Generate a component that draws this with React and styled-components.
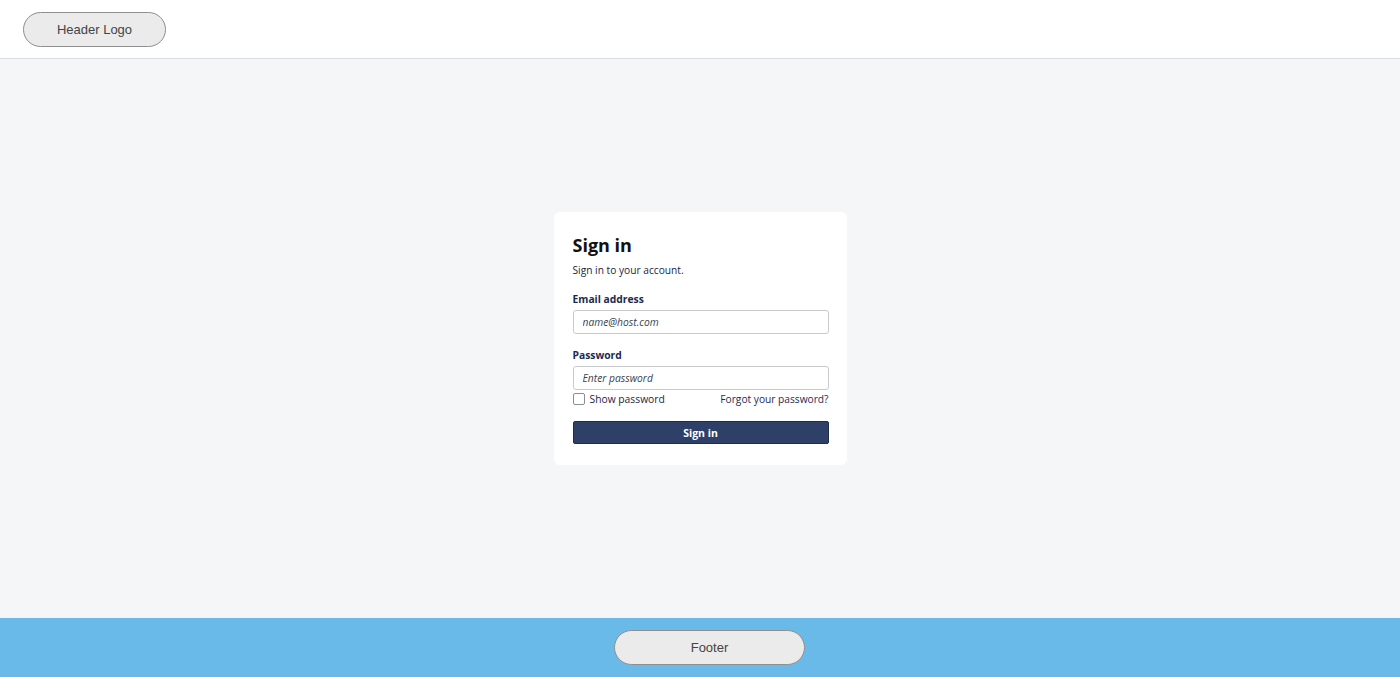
import React from "react";
import styled, { createGlobalStyle } from "styled-components";

const Global = createGlobalStyle`
  html, body { margin: 0; padding: 0; height: 100%; }
  body { font-family: "Open Sans", "Noto Sans", sans-serif; }
  #root { height: 100%; }
`;

const Page = styled.div`
  display: flex;
  flex-direction: column;
  height: 677px;
`;

const Header = styled.header`
  height: 58px;
  flex: none;
  background: #ffffff;
  border-bottom: 1px solid #dcdde0;
  display: flex;
  align-items: center;
  padding-left: 23px;
`;

const Pill = styled.div`
  width: ${(p) => p.$w}px;
  height: 35px;
  box-sizing: border-box;
  border: 1px solid #8f8f8f;
  border-radius: 18px;
  background: #ebebeb;
  display: flex;
  align-items: center;
  justify-content: center;
  font-family: "Liberation Sans", Arial, sans-serif;
  font-size: 13px;
  color: #444;
`;

const Main = styled.main`
  flex: 1;
  background: #f5f6f8;
  display: flex;
  align-items: center;
  justify-content: center;
`;

const Card = styled.form`
  width: 293px;
  box-sizing: border-box;
  background: #fff;
  border-radius: 6px;
  padding: 20px 18px 21px 19px;
  display: flex;
  flex-direction: column;
`;

const Title = styled.h1`
  margin: 0;
  font-size: 18px;
  font-weight: 700;
  color: #111;
  line-height: 26px;
`;

const Subtitle = styled.p`
  margin: 5px 0 0;
  font-size: 10.2px;
  color: #1c2540;
  line-height: 15px;
`;

const Field = styled.div`
  display: flex;
  flex-direction: column;
  margin-top: ${(p) => p.$mt}px;
`;

const Label = styled.label`
  font-size: 10.3px;
  font-weight: 700;
  color: #1d2a52;
  line-height: 15px;
  margin-bottom: 3px;
`;

const Input = styled.input`
  height: 24px;
  box-sizing: border-box;
  border: 1px solid #c8cacf;
  border-radius: 3px;
  padding: 0 9px;
  font-family: "Open Sans", sans-serif;
  font-size: 10.3px;
  color: #222;
  outline: none;
  &::placeholder {
    font-style: italic;
    color: #3a3f4f;
  }
`;

const OptionsRow = styled.div`
  display: flex;
  justify-content: space-between;
  align-items: center;
  margin-top: 2px;
  height: 14px;
`;

const CheckLabel = styled.label`
  display: flex;
  align-items: center;
  gap: 5px;
  font-size: 10.3px;
  color: #1c2540;
`;

const Box = styled.span`
  width: 12px;
  height: 12px;
  box-sizing: border-box;
  border: 1px solid #8a8d96;
  border-radius: 2px;
  background: #fff;
`;

const Link = styled.a`
  font-size: 10.2px;
  color: #1c2a55;
  text-decoration: none;
`;

const Button = styled.button`
  margin-top: 15px;
  height: 23px;
  border: 1px solid #1f2c4a;
  border-radius: 2px;
  background: #2e4068;
  color: #fff;
  font-family: "Open Sans", sans-serif;
  font-size: 10.5px;
  font-weight: 700;
  cursor: pointer;
`;

const Footer = styled.footer`
  height: 59px;
  flex: none;
  background: #69bae8;
  display: flex;
  align-items: center;
  justify-content: center;
  padding-left: 19px;
`;

export default function App() {
  return (
    <Page>
      <Global />
      <Header>
        <Pill $w={143}>Header Logo</Pill>
      </Header>
      <Main>
        <Card onSubmit={(e) => e.preventDefault()}>
          <Title>Sign in</Title>
          <Subtitle>Sign in to your account.</Subtitle>
          <Field $mt={14}>
            <Label>Email address</Label>
            <Input placeholder="name@host.com" />
          </Field>
          <Field $mt={14}>
            <Label>Password</Label>
            <Input type="password" placeholder="Enter password" />
          </Field>
          <OptionsRow>
            <CheckLabel>
              <Box />
              Show password
            </CheckLabel>
            <Link href="#">Forgot your password?</Link>
          </OptionsRow>
          <Button type="submit">Sign in</Button>
        </Card>
      </Main>
      <Footer>
        <Pill $w={191}>Footer</Pill>
      </Footer>
    </Page>
  );
}
